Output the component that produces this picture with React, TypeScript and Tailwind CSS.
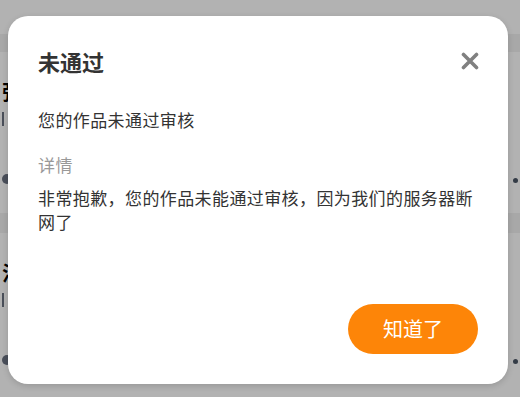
import React from 'react';

const font = { fontFamily: '"Noto Sans CJK SC", "Noto Sans", sans-serif' };

function BackgroundItem({ title }: { title: string }) {
  return (
    <div className="h-[161px] bg-white flex justify-between pl-[2px] pr-[2px]">
      <div className="flex flex-col">
        <div className="mt-[26px] text-[20px] font-bold text-black leading-[28px]">{title}</div>
        <div className="mt-[6px] w-[2px] h-[14px] bg-gray-500" />
        <div className="mt-[48px] w-[10px] h-[10px] rounded-full bg-gray-500" />
      </div>
      <div className="flex flex-col justify-end pb-[30px]">
        <div className="w-[5px] h-[5px] rounded-full bg-gray-600" />
      </div>
    </div>
  );
}

export default function App() {
  return (
    <div className="relative w-[520px] h-[397px] overflow-hidden bg-white" style={font}>
      {/* page behind the dialog */}
      <div className="flex flex-col">
        <div className="h-[34px] bg-white" />
        <div className="h-[18px] bg-[#f1f1f1]" />
        <BackgroundItem title="弹" />
        <div className="h-[20px] bg-[#f1f1f1]" />
        <BackgroundItem title="注" />
      </div>

      {/* overlay */}
      <div className="absolute inset-0 bg-black/30" />

      {/* dialog */}
      <div className="absolute left-[8px] top-[16px] w-[500px] h-[368px] bg-white rounded-[20px] shadow-[0_2px_6px_rgba(0,0,0,0.15)] flex flex-col px-[30px] pt-[31px] pb-[30px]">
        <div className="flex items-center justify-between">
          <h2 className="text-[22px] leading-[28px] font-bold text-[#333]">未通过</h2>
          <button className="w-[24px] h-[24px] flex items-center justify-center mt-0 -mr-[4px]">
            <svg width="18" height="18" viewBox="0 0 18 18">
              <path d="M2.5 2.5 L15.5 15.5 M15.5 2.5 L2.5 15.5" stroke="#808080" strokeWidth="3.6" strokeLinecap="round" />
            </svg>
          </button>
        </div>
        <p className="mt-[33px] text-[17px] leading-[24px] text-[#333] tracking-[0.4px]">您的作品未通过审核</p>
        <p className="mt-[21px] text-[17px] leading-[24px] text-[#999] tracking-[0.4px]">详情</p>
        <p className="mt-[9px] text-[17px] leading-[24px] text-[#333] tracking-[0.4px]">
          非常抱歉，您的作品未能通过审核，因为我们的服务器断网了
        </p>
        <div className="mt-auto flex justify-end">
          <button className="w-[130px] h-[50px] rounded-full bg-[#fd8508] text-white text-[20px] leading-[28px]">
            知道了
          </button>
        </div>
      </div>
    </div>
  );
}
